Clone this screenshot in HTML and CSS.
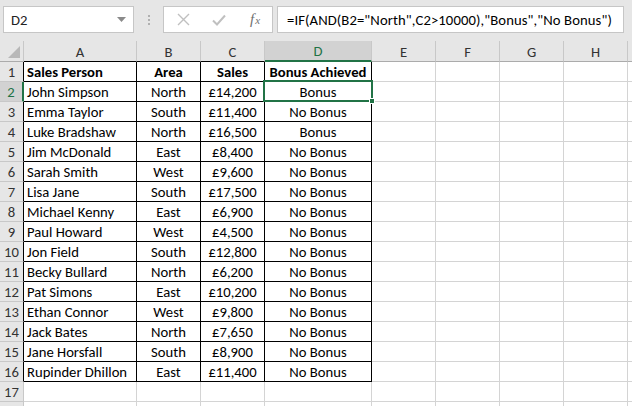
FILE: index.html
```html
<!DOCTYPE html>
<html>
<head>
<meta charset="utf-8">
<link rel="stylesheet" href="styles.css">
</head>
<body>
<div class="app">
  <div class="fbar">
    <div class="namebox"><span class="nb-text">D2</span><svg class="caret" width="9" height="5" viewBox="0 0 9 5"><path d="M0 0H9L4.5 5Z" fill="#8a8a8a"/></svg></div>
    <div class="grip"><i></i><i></i><i></i></div>
    <div class="fnbox">
      <svg class="ico" width="13" height="13" viewBox="0 0 13 13"><path d="M1 1L12 12M12 1L1 12" stroke="#c0c0c0" stroke-width="1.4" fill="none"/></svg>
      <svg class="ico" width="14" height="12" viewBox="0 0 14 12"><path d="M1 6.5L5 10.5L13 1.5" stroke="#c0c0c0" stroke-width="2" fill="none"/></svg>
      <span class="fx">f<span class="fxx">x</span></span>
    </div>
    <div class="formula">=IF(AND(B2="North",C2&gt;10000),"Bonus","No Bonus")</div>
  </div>
  <div class="sheet">
    <div class="corner"><span class="tri"></span></div>
    <div class="ch">A</div><div class="ch">B</div><div class="ch">C</div><div class="ch sel">D</div><div class="ch">E</div><div class="ch">F</div><div class="ch">G</div><div class="ch">H</div><div class="ch"></div>

    <div class="rh tb">1</div><div class="c t l b">Sales Person</div><div class="c t m b">Area</div><div class="c t m b">Sales</div><div class="c t m b">Bonus Achieved</div><div class="c"></div><div class="c"></div><div class="c"></div><div class="c"></div><div class="c"></div>
    <div class="rh sel">2</div><div class="c t l">John Simpson</div><div class="c t m">North</div><div class="c t m">£14,200</div><div class="c t m active">Bonus<span class="handle"></span></div><div class="c"></div><div class="c"></div><div class="c"></div><div class="c"></div><div class="c"></div>
    <div class="rh tb">3</div><div class="c t l">Emma Taylor</div><div class="c t m">South</div><div class="c t m">£11,400</div><div class="c t m">No Bonus</div><div class="c"></div><div class="c"></div><div class="c"></div><div class="c"></div><div class="c"></div>
    <div class="rh tb">4</div><div class="c t l">Luke Bradshaw</div><div class="c t m">North</div><div class="c t m">£16,500</div><div class="c t m">Bonus</div><div class="c"></div><div class="c"></div><div class="c"></div><div class="c"></div><div class="c"></div>
    <div class="rh tb">5</div><div class="c t l">Jim McDonald</div><div class="c t m">East</div><div class="c t m">£8,400</div><div class="c t m">No Bonus</div><div class="c"></div><div class="c"></div><div class="c"></div><div class="c"></div><div class="c"></div>
    <div class="rh tb">6</div><div class="c t l">Sarah Smith</div><div class="c t m">West</div><div class="c t m">£9,600</div><div class="c t m">No Bonus</div><div class="c"></div><div class="c"></div><div class="c"></div><div class="c"></div><div class="c"></div>
    <div class="rh tb">7</div><div class="c t l">Lisa Jane</div><div class="c t m">South</div><div class="c t m">£17,500</div><div class="c t m">No Bonus</div><div class="c"></div><div class="c"></div><div class="c"></div><div class="c"></div><div class="c"></div>
    <div class="rh tb">8</div><div class="c t l">Michael Kenny</div><div class="c t m">East</div><div class="c t m">£6,900</div><div class="c t m">No Bonus</div><div class="c"></div><div class="c"></div><div class="c"></div><div class="c"></div><div class="c"></div>
    <div class="rh tb">9</div><div class="c t l">Paul Howard</div><div class="c t m">West</div><div class="c t m">£4,500</div><div class="c t m">No Bonus</div><div class="c"></div><div class="c"></div><div class="c"></div><div class="c"></div><div class="c"></div>
    <div class="rh tb">10</div><div class="c t l">Jon Field</div><div class="c t m">South</div><div class="c t m">£12,800</div><div class="c t m">No Bonus</div><div class="c"></div><div class="c"></div><div class="c"></div><div class="c"></div><div class="c"></div>
    <div class="rh tb">11</div><div class="c t l">Becky Bullard</div><div class="c t m">North</div><div class="c t m">£6,200</div><div class="c t m">No Bonus</div><div class="c"></div><div class="c"></div><div class="c"></div><div class="c"></div><div class="c"></div>
    <div class="rh tb">12</div><div class="c t l">Pat Simons</div><div class="c t m">East</div><div class="c t m">£10,200</div><div class="c t m">No Bonus</div><div class="c"></div><div class="c"></div><div class="c"></div><div class="c"></div><div class="c"></div>
    <div class="rh tb">13</div><div class="c t l">Ethan Connor</div><div class="c t m">West</div><div class="c t m">£9,800</div><div class="c t m">No Bonus</div><div class="c"></div><div class="c"></div><div class="c"></div><div class="c"></div><div class="c"></div>
    <div class="rh tb">14</div><div class="c t l">Jack Bates</div><div class="c t m">North</div><div class="c t m">£7,650</div><div class="c t m">No Bonus</div><div class="c"></div><div class="c"></div><div class="c"></div><div class="c"></div><div class="c"></div>
    <div class="rh tb">15</div><div class="c t l">Jane Horsfall</div><div class="c t m">South</div><div class="c t m">£8,900</div><div class="c t m">No Bonus</div><div class="c"></div><div class="c"></div><div class="c"></div><div class="c"></div><div class="c"></div>
    <div class="rh tb">16</div><div class="c t l">Rupinder Dhillon</div><div class="c t m">East</div><div class="c t m">£11,400</div><div class="c t m">No Bonus</div><div class="c"></div><div class="c"></div><div class="c"></div><div class="c"></div><div class="c"></div>
    <div class="rh">17</div><div class="c"></div><div class="c"></div><div class="c"></div><div class="c"></div><div class="c"></div><div class="c"></div><div class="c"></div><div class="c"></div><div class="c"></div>
    <div class="rh"></div><div class="c"></div><div class="c"></div><div class="c"></div><div class="c"></div><div class="c"></div><div class="c"></div><div class="c"></div><div class="c"></div><div class="c"></div>
  </div>
</div>
</body>
</html>
```
FILE: styles.css
```css
* { box-sizing: border-box; }
html, body { margin: 0; padding: 0; }
body {
  width: 632px;
  height: 406px;
  overflow: hidden;
  background: #ffffff;
  font-family: "Carlito", "Calibri", "Lato", "Liberation Sans", sans-serif;
  font-size: 14.67px;
  color: #000;
}
.app { width: 632px; height: 406px; overflow: hidden; }

.fbar {
  height: 41px;
  background: #e6e6e6;
  display: flex;
  align-items: flex-start;
  padding: 6px 0 0 3px;
}
.namebox {
  width: 131px;
  height: 27px;
  background: #fff;
  border: 1px solid #c6c6c6;
  display: flex;
  align-items: center;
  justify-content: space-between;
  padding: 0 7px 0 7px;
}
.nb-text { font-size: 14.67px; color: #222; }
.caret { display: block; }
.grip {
  width: 29px;
  height: 27px;
  display: flex;
  flex-direction: column;
  align-items: center;
  justify-content: center;
  gap: 2px;
}
.grip i { display: block; width: 2px; height: 2px; background: #b0b0b0; }
.fnbox {
  width: 110px;
  height: 27px;
  background: #fff;
  border: 1px solid #c6c6c6;
  display: flex;
  align-items: center;
  padding: 0 0 0 13px;
  gap: 22px;
}
.ico { display: block; }
.fx {
  font-family: "Liberation Serif", serif;
  font-style: italic;
  font-size: 15px;
  color: #707070;
  margin-left: 2px;
}
.fxx { font-size: 11px; margin-left: 1px; }
.formula {
  margin-left: 4px;
  width: 347px;
  height: 27px;
  background: #fff;
  border: 1px solid #c6c6c6;
  display: flex;
  align-items: center;
  padding-left: 9px;
  white-space: nowrap;
  color: #000;
  letter-spacing: 0.1px;
}

.sheet {
  display: grid;
  grid-template-columns: 24px 113px 64px 64px 107px 64px 64px 64px 64px 64px;
  grid-template-rows: 21px repeat(17, 20px) 20px;
}
.corner {
  background: #e6e6e6;
  border-right: 1px solid #c8c8c8;
  border-bottom: 1px solid #ababab;
  position: relative;
}
.tri {
  position: absolute;
  right: 3px;
  bottom: 3px;
  width: 0; height: 0;
  border-left: 12px solid transparent;
  border-bottom: 12px solid #b8b8b8;
}
.ch {
  background: #e6e6e6;
  border-right: 1px solid #c8c8c8;
  border-bottom: 1px solid #ababab;
  display: flex;
  align-items: center;
  justify-content: center;
  color: #333;
  padding-top: 1px;
}
.ch:nth-child(2), .ch:nth-child(3), .ch:nth-child(4) { border-bottom-color: #000; }
.ch.sel {
  background: #d2d2d2;
  color: #217346;
  border-bottom: 2px solid #217346;
}
.rh {
  background: #e6e6e6;
  border-right: 1px solid #c8c8c8;
  border-bottom: 1px solid #c8c8c8;
  display: flex;
  align-items: center;
  justify-content: center;
  color: #333;
  padding-top: 1px;
}
.rh.tb { border-right-color: #000; }
.rh.sel {
  background: #d2d2d2;
  color: #217346;
  border-right: 2px solid #217346;
}
.c {
  border-right: 1px solid #d4d4d4;
  border-bottom: 1px solid #d4d4d4;
  display: flex;
  align-items: center;
  white-space: nowrap;
  overflow: visible;
  padding-top: 1px;
}
.c.t { border-right-color: #000; border-bottom-color: #000; }
.c.l { padding-left: 3px; }
.c.m { justify-content: center; }
.c.b { font-weight: bold; }
.active { position: relative; }
.active::after {
  content: "";
  position: absolute;
  left: -2px;
  top: -2px;
  right: -2px;
  bottom: -1px;
  border: 2px solid #217346;
  pointer-events: none;
}
.handle {
  position: absolute;
  right: -4px;
  bottom: -3px;
  width: 6px;
  height: 6px;
  background: #217346;
  border: 1px solid #fff;
  z-index: 2;
}
```
